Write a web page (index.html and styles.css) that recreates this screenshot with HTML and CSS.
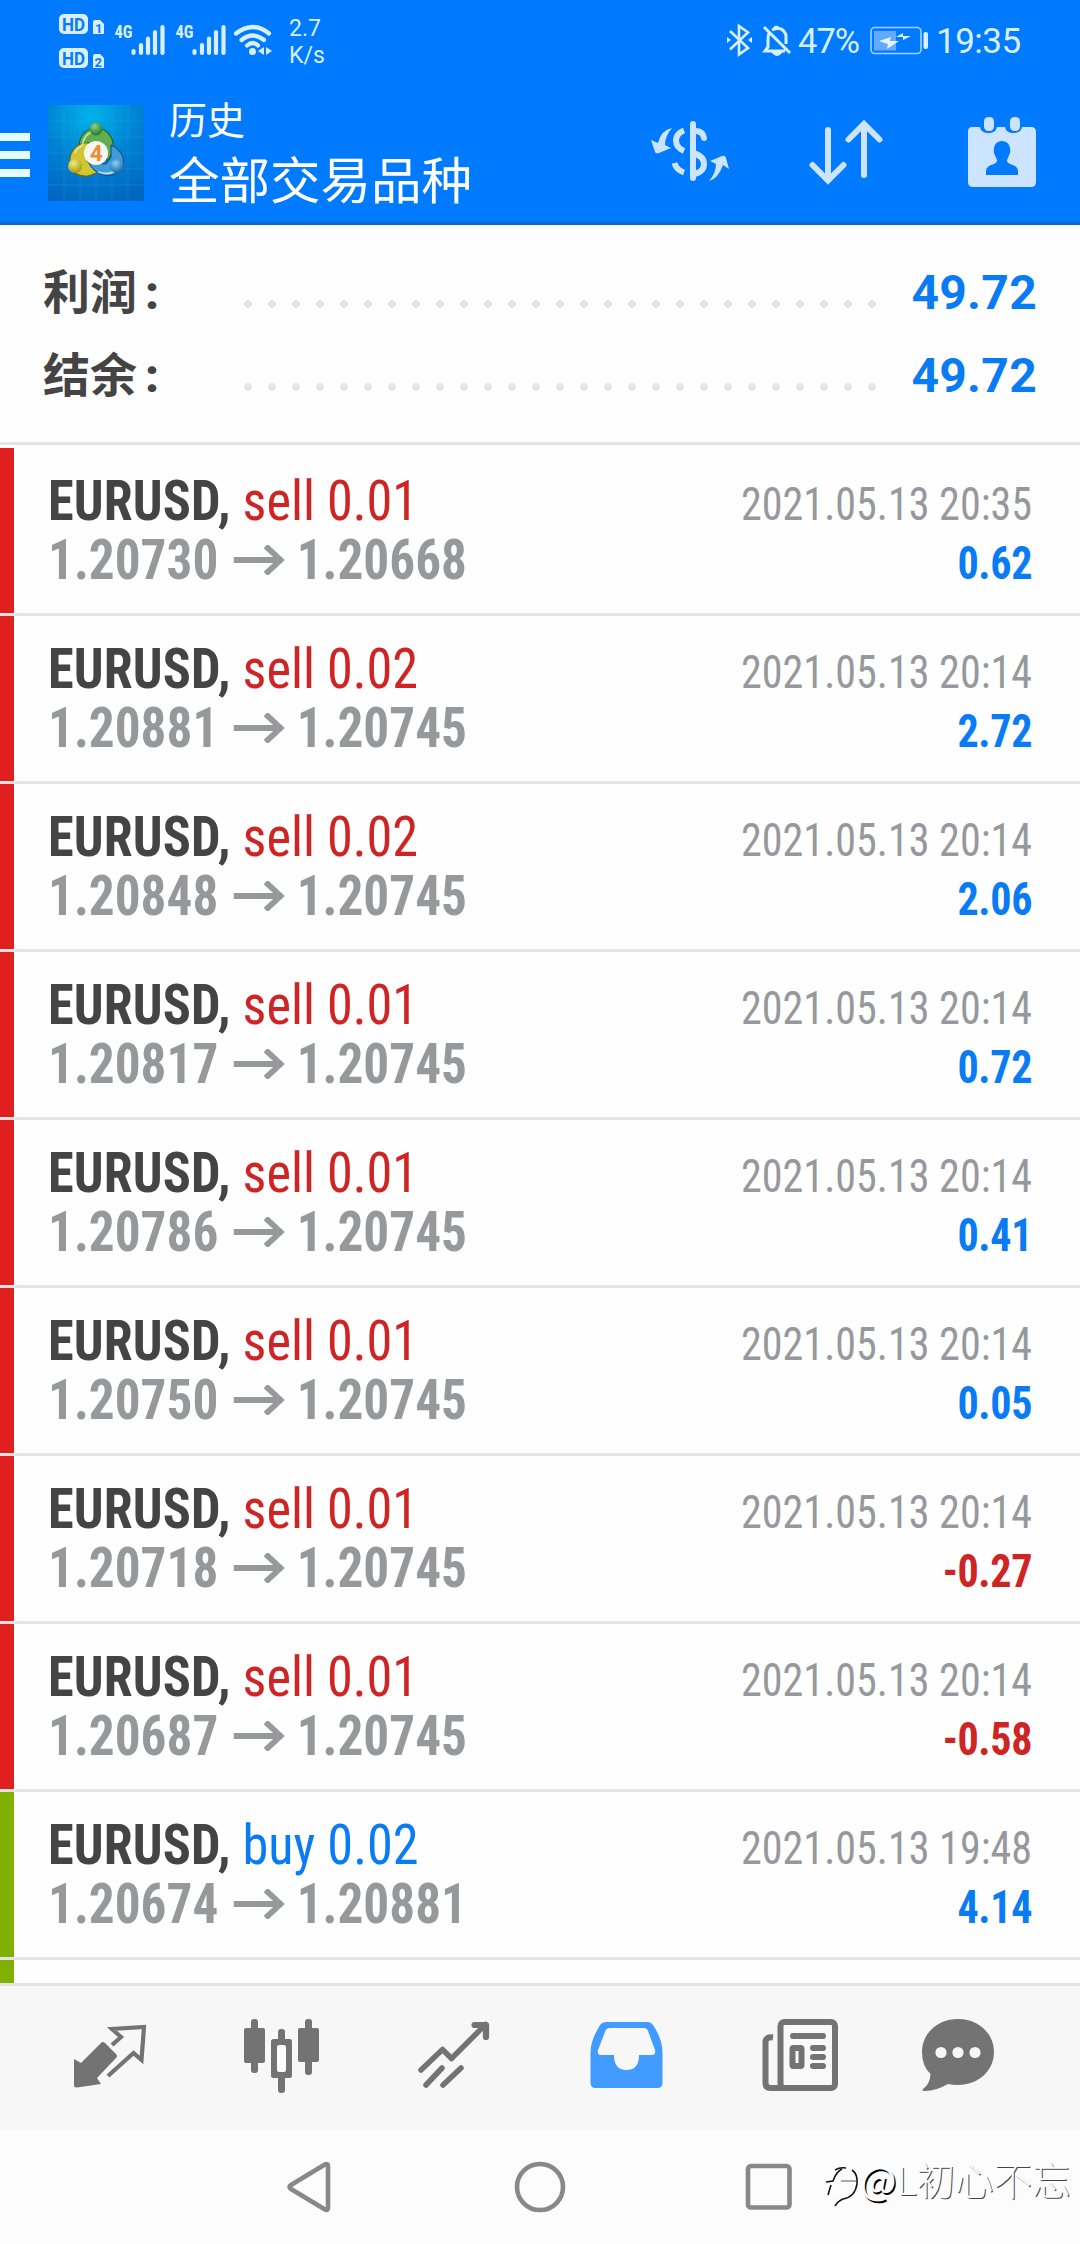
FILE: index.html
```html
<!DOCTYPE html>
<html lang="zh-CN">
<head>
<meta charset="utf-8">
<title>历史</title>
<link rel="stylesheet" href="styles.css">
</head>
<body>
<header class="header">
  <div class="status">
    <svg class="status-left" viewBox="0 0 280 75" width="280" height="75">
      <g fill="#d9efff">
        <rect x="59" y="14" width="29" height="20" rx="5"/>
        <rect x="59" y="48" width="29" height="20" rx="5"/>
        <path d="M93 22q0-2 2-2h5l4 4v10H93zM93 56q0-2 2-2h5l4 4v10H93z"/>
        <g class="hd-text" fill="#087bfa">
          <text x="62" y="30.500" textLength="23" lengthAdjust="spacingAndGlyphs">HD</text>
          <text x="62" y="64.500" textLength="23" lengthAdjust="spacingAndGlyphs">HD</text>
          <text x="95" y="32.500" class="sim">1</text>
          <text x="94.500" y="66.500" class="sim">2</text>
        </g>
        <g class="net-text">
          <text x="114.500" y="38" textLength="18" lengthAdjust="spacingAndGlyphs">4G</text>
          <text x="175.500" y="38" textLength="18" lengthAdjust="spacingAndGlyphs">4G</text>
        </g>
      </g>
      <g stroke="#d9efff" stroke-width="4.200" stroke-linecap="round" fill="none">
        <path d="M133.500 51v2M141 45v8M148 38.500v14.500M155 32v21M162.500 27v26"/>
        <path d="M194.500 51v2M202 45v8M209 38.500v14.500M216 32v21M223.500 27v26"/>
        <path d="M236 33.500q17-13 33 0M241.500 40q11.500-9 22.500 0M247 45.500q6-5 11 0"/>
      </g>
      <g fill="#d9efff"><circle cx="252.500" cy="51.500" r="3.500"/><path d="M264 47v8l-6-4zM266 47l6 4-6 4z"/></g>
    </svg>
    <div class="speed">2.7<br>K/s</div>
    <div class="status-right">
      <svg viewBox="725 20 70 40" width="70" height="40" fill="none" stroke="#d9efff" stroke-width="2.600">
        <path d="M730 31l18 17-9 6.500V26l9 6.500-18 17"/>
        <path d="M727 37l4 3-4 3zM752 37l-4 3 4 3z" fill="#d9efff" stroke="none"/>
        <path d="M764 27l26 26M769 33q-1 3-1 7v7l-3 4h20M772 30q10-5 14 5v9M774 29q2-4 5 0" stroke-width="3"/>
        <path d="M774 53q3 3 6 0z" fill="#d9efff"/>
      </svg>
      <span class="percent">47%</span>
      <svg viewBox="868 20 62 40" width="62" height="40">
        <rect x="871" y="27.500" width="50" height="26" rx="4" fill="none" stroke="#a5d2ff" stroke-width="1.600"/>
        <rect x="874" y="31" width="22" height="19.500" fill="#63a9ff"/>
        <path d="M879 41l12-4-1 4h9l-12 8 1-5zM896 37l7-4v3h8l-8 4v-3z" fill="#e5f5ff"/>
        <rect x="923.500" y="32" width="4.500" height="17" rx="2" fill="#d9efff"/>
      </svg>
      <span class="clock">19:35</span>
    </div>
  </div>
  <div class="toolbar">
    <div class="menu"><i></i><i></i><i></i></div>
    <svg class="logo" viewBox="0 0 96 96" width="96" height="96">
      <defs>
        <radialGradient id="bg" cx=".45" cy=".1" r=".95"><stop offset="0" stop-color="#00b2ea"/><stop offset=".5" stop-color="#0083d3"/><stop offset="1" stop-color="#0066c0"/></radialGradient>
        <radialGradient id="gr" cx=".4" cy=".3" r=".7"><stop offset="0" stop-color="#8fd07d"/><stop offset="1" stop-color="#1f7a2c"/></radialGradient>
        <radialGradient id="ye" cx=".4" cy=".3" r=".7"><stop offset="0" stop-color="#f4ec7c"/><stop offset="1" stop-color="#a59a14"/></radialGradient>
        <radialGradient id="bl" cx=".4" cy=".3" r=".7"><stop offset="0" stop-color="#8bd0f5"/><stop offset="1" stop-color="#1267ab"/></radialGradient>
      </defs>
      <rect width="96" height="96" fill="url(#bg)"/>
      <path d="M16 0v96M32 0v96M48 0v96M64 0v96M80 0v96M0 16h96M0 32h96M0 48h96M0 64h96M0 80h96" stroke="#45b4ef" stroke-width=".6" opacity=".35"/>
      <g stroke-width="1.200" stroke-linejoin="round">
        <path d="M31 42c0-11 7-19 17-19s19 9 17 22l-5 11-9-17-11-1z" fill="#62ad50" stroke="#1c6430"/>
        <path d="M36 38c-9 2-15 10-14 20s9 14 18 13l11-4-12-11 2-18z" fill="#d0c632" stroke="#6f6a16"/>
        <path d="M63 40c9 4 14 12 12 20s-11 12-20 10c-6-2-11-6-14-12l17 1 5-7z" fill="#3f9cdb" stroke="#13558f"/>
        <path d="M34 41c1-8 6-13 12-15M27 48c1-3 4-6 7-7M50 67c6 2 13 2 18-2" fill="none" stroke="#e4f3d8" stroke-opacity=".75" stroke-width="1.800"/>
      </g>
      <circle cx="48" cy="24" r="6.500" fill="url(#gr)"/>
      <circle cx="27" cy="61" r="7" fill="url(#ye)"/>
      <circle cx="69" cy="61" r="7" fill="url(#bl)"/>
      <circle cx="48" cy="48" r="12" fill="#f6f5f3"/>
      <text class="logo-num" x="42" y="55.500" fill="#f08a33">4</text>
    </svg>
    <div class="titles">
      <div class="title">历史</div>
      <div class="subtitle">全部交易品种</div>
    </div>
    <svg class="actions" viewBox="640 100 440 100" width="440" height="100">
      <g fill="#cce4ff">
        <path d="M672 128q-11 2-14 15l-7-3 4 12q1 2 4 1l12-5-6-3q0-9 7-17z"/>
        <path d="M709 181q9-2 14-16l6 4-3-11q-1-3-4-2l-12 5 6 3q0 9-7 17z"/>
      </g>
      <g fill="none" stroke="#cce4ff" stroke-width="6" stroke-linecap="round">
        <path d="M693 124v54"/>
        <path d="M693 131q10-1 11 7M693 153q11 3 11 11 0 8-11 10.500" />
        <path d="M684 130.500q-8 3-8 10 0 7 8 10.500M674.500 163q2 7 9.500 9.500" stroke-linecap="butt"/>
        <path d="M828 130v50M812.500 165l15.500 15.500L843.500 165M864 175v-50M848.500 139.500L864 124l15.500 15.500"/>
      </g>
      <g fill="#cce4ff">
        <path fill-rule="evenodd" d="M972 127h8q1 6 8.500 6t8.500-6h8q1 6 8.500 6t8.500-6h9q5 0 5 5v50q0 5-5 5h-58q-5 0-5-5v-50q0-5 4-5zM1002 141c-6 0-9 5-8 12l3 7q1 2-3 4-8 2-8 7v4h32v-4q0-5-8-7-4-2-3-4l3-7c1-7-2-12-8-12z"/>
        <rect x="984" y="117" width="10" height="14" rx="4.500"/>
        <rect x="1010" y="117" width="10" height="14" rx="4.500"/>
      </g>
    </svg>
  </div>
</header>

<section class="summary">
  <div class="sum-row"><span class="label">利润<b>:</b></span><span class="dots"></span><span class="amount">49.72</span></div>
  <div class="sum-row"><span class="label">结余<b>:</b></span><span class="dots"></span><span class="amount">49.72</span></div>
</section>

<main class="deals">
  <div class="deal sell"><div class="info"><div class="name"><b>EURUSD,</b> <span>sell 0.01</span></div><div class="price">1.20730<svg class="arrow" viewBox="0 0 51 28"><path d="M0 14h46M32 1l15 13-15 13"/></svg>1.20668</div></div><div class="side"><div class="date">2021.05.13 20:35</div><div class="profit">0.62</div></div></div>
  <div class="deal sell"><div class="info"><div class="name"><b>EURUSD,</b> <span>sell 0.02</span></div><div class="price">1.20881<svg class="arrow" viewBox="0 0 51 28"><path d="M0 14h46M32 1l15 13-15 13"/></svg>1.20745</div></div><div class="side"><div class="date">2021.05.13 20:14</div><div class="profit">2.72</div></div></div>
  <div class="deal sell"><div class="info"><div class="name"><b>EURUSD,</b> <span>sell 0.02</span></div><div class="price">1.20848<svg class="arrow" viewBox="0 0 51 28"><path d="M0 14h46M32 1l15 13-15 13"/></svg>1.20745</div></div><div class="side"><div class="date">2021.05.13 20:14</div><div class="profit">2.06</div></div></div>
  <div class="deal sell"><div class="info"><div class="name"><b>EURUSD,</b> <span>sell 0.01</span></div><div class="price">1.20817<svg class="arrow" viewBox="0 0 51 28"><path d="M0 14h46M32 1l15 13-15 13"/></svg>1.20745</div></div><div class="side"><div class="date">2021.05.13 20:14</div><div class="profit">0.72</div></div></div>
  <div class="deal sell"><div class="info"><div class="name"><b>EURUSD,</b> <span>sell 0.01</span></div><div class="price">1.20786<svg class="arrow" viewBox="0 0 51 28"><path d="M0 14h46M32 1l15 13-15 13"/></svg>1.20745</div></div><div class="side"><div class="date">2021.05.13 20:14</div><div class="profit">0.41</div></div></div>
  <div class="deal sell"><div class="info"><div class="name"><b>EURUSD,</b> <span>sell 0.01</span></div><div class="price">1.20750<svg class="arrow" viewBox="0 0 51 28"><path d="M0 14h46M32 1l15 13-15 13"/></svg>1.20745</div></div><div class="side"><div class="date">2021.05.13 20:14</div><div class="profit">0.05</div></div></div>
  <div class="deal sell"><div class="info"><div class="name"><b>EURUSD,</b> <span>sell 0.01</span></div><div class="price">1.20718<svg class="arrow" viewBox="0 0 51 28"><path d="M0 14h46M32 1l15 13-15 13"/></svg>1.20745</div></div><div class="side"><div class="date">2021.05.13 20:14</div><div class="profit loss">-0.27</div></div></div>
  <div class="deal sell"><div class="info"><div class="name"><b>EURUSD,</b> <span>sell 0.01</span></div><div class="price">1.20687<svg class="arrow" viewBox="0 0 51 28"><path d="M0 14h46M32 1l15 13-15 13"/></svg>1.20745</div></div><div class="side"><div class="date">2021.05.13 20:14</div><div class="profit loss">-0.58</div></div></div>
  <div class="deal buy"><div class="info"><div class="name"><b>EURUSD,</b> <span>buy 0.02</span></div><div class="price">1.20674<svg class="arrow" viewBox="0 0 51 28"><path d="M0 14h46M32 1l15 13-15 13"/></svg>1.20881</div></div><div class="side"><div class="date">2021.05.13 19:48</div><div class="profit">4.14</div></div></div>
  <div class="deal buy"></div>
</main>

<nav class="tabs">
  <svg viewBox="24 1986 172 144" fill="#737373">
    <path d="M74 2059l7 4 20-20q2-2 4 0l11 11q2 2 0 4l-19 20 4 6-24 3.500q-3 .500-3-2.500z"/>
    <path d="M112 2045l9-8-9-8 32-2-2.500 33-8-7-25.500 23" fill="none" stroke="#737373" stroke-width="4.200"/>
  </svg>
  <svg viewBox="196 1986 172 144" fill="#737373">
    <rect x="244" y="2028" width="21" height="35" rx="2"/><rect x="251" y="2019" width="7" height="54" rx="3"/>
    <rect x="298" y="2028" width="21" height="34" rx="2"/><rect x="305" y="2019" width="7" height="56" rx="3"/>
    <rect x="271" y="2039" width="21" height="39" rx="2.500"/><rect x="278" y="2029" width="7" height="64" rx="3"/>
    <rect x="277" y="2045" width="9" height="27" rx="2" fill="#fcfcfc"/>
  </svg>
  <svg viewBox="368 1986 172 144" fill="none" stroke="#737373" stroke-width="5.500" stroke-linecap="round" stroke-linejoin="round">
    <path d="M421 2070l21.500-20.500 9 9 34-34"/><path d="M474.500 2025h11.500v12" stroke-width="6.200"/>
    <path d="M426 2085l16-17M443 2085l18-17"/>
  </svg>
  <svg viewBox="540 1986 172 144">
    <path fill="#429bff" d="M607 2022h40q4 0 6 3c6 9 9.500 18 9.500 28v30q0 5-5 5h-62q-5 0-5-5v-30c0-10 4-19 9-27q2-4 7-4z"/>
    <path fill="#f7f7f8" d="M610 2028h34q3 0 4 3l7 19q1 5-3 5h-13q0 15-12.500 15T614 2055h-13q-4 0-3-5l7-18q1-4 5-4z"/>
  </svg>
  <svg viewBox="712 1986 172 144" fill="none" stroke="#737373" stroke-width="6">
    <rect x="780.500" y="2022" width="54.500" height="66" rx="4" fill="#f9f9fa"/>
    <path d="M773 2037.500q-7.500-1-7.500 5V2083q0 5 5 5H785"/>
    <path d="M793 2036h30M813 2048h10M813 2057h10M813 2066h10" stroke-linecap="round"/>
    <rect x="792.500" y="2048" width="9" height="18" rx="1"/>
  </svg>
  <svg viewBox="884 1986 172 144">
    <path fill="#737373" d="M958 2019c20 0 36 14 36 33s-16 33-36 33q-6 0-10-1-12 7-23 7-4 0-2-2 7-5 7.500-15-8.500-8-8.500-22c0-19 16-33 36-33z"/>
    <g fill="#f7f7f8"><circle cx="941" cy="2052.500" r="5.600"/><circle cx="958" cy="2052.500" r="5.600"/><circle cx="975" cy="2052.500" r="5.600"/></g>
  </svg>
</nav>

<footer class="sysnav">
  <svg viewBox="0 2130 820 114" width="820" height="114" fill="none" stroke="#888" stroke-width="4.600" stroke-linejoin="round">
    <path d="M326 2164q2 0 2 2v42q0 3-3 1.500l-34-20.500q-3-2 0-4l33-20q1-1 2-1z"/>
    <circle cx="540" cy="2187" r="23"/>
    <rect x="748" y="2166" width="41.500" height="41.500" rx="3"/>
  </svg>
  <div class="watermark">
    <svg viewBox="820 2160 42 50" width="42" height="50" fill="none" stroke="#111" stroke-width="1.600">
      <path d="M835 2170q5-3 11-2M852 2170q6 4 5 14-2 13-14 15-5 2-8 7"/>
      <path d="M826 2182l7-1q3-9 9-12M831 2185l-3 10"/>
      <path d="M841 2181h16" stroke-width=".7"/>
    </svg>
    <span><span class="at">@</span>L初心不忘</span>
  </div>
</footer>
</body>
</html>
```
FILE: styles.css
```css
* { box-sizing: border-box; }
body {
  margin: 0;
  width: 1080px;
  height: 2244px;
  overflow: hidden;
  display: flex;
  flex-direction: column;
  background: #fefefe;
  font-family: Roboto, "Noto Sans CJK SC", sans-serif;
}
svg { display: block; flex: none; }

.header { height: 225px; background: #007aff; border-bottom: 3px solid #0f69cc; color: #fff; flex: none; }
.status { height: 75px; display: flex; color: #d9efff; }
.hd-text { font: bold 18px "Roboto"; }
.hd-text .sim { font-size: 13px; }
.net-text { font: bold 18px "Roboto Condensed"; }
.speed { width: 60px; padding: 15px 0 0 9px; font-size: 23px; line-height: 27px; }
.status-right { display: flex; align-items: center; margin-left: 385px; height: 80px; }
.percent { width: 73px; padding: 2px 0 0 3px; font-size: 34.500px; letter-spacing: -1px; }
.clock { padding: 2px 0 0 6px; font-size: 35px; letter-spacing: -.5px; white-space: nowrap; }

.toolbar { display: flex; height: 147px; }
.menu { width: 30px; margin-right: 18px; padding-top: 58px; display: flex; flex-direction: column; gap: 10px; }
.menu i { height: 8px; background: #e6fbff; }
.logo { margin-top: 30px; }
.logo-num { font: bold 22px "Roboto"; }
.titles { width: 496px; padding: 18px 0 0 25px; white-space: nowrap; }
.title { font-size: 38px; line-height: 56px; }
.subtitle { font-size: 50.500px; line-height: 66px; }
.actions { margin-top: 25px; }

.summary { height: 220px; flex: none; padding: 26px 43px 0; border-bottom: 3px solid #e4e4e4; margin-bottom: 3px; }
.sum-row { height: 83px; display: flex; align-items: center; }
.label { width: 201px; font-size: 47px; line-height: 83px; font-weight: bold; color: #444; }
.label b { font-family: Roboto; margin-left: 8px; }
.dots { width: 632px; height: 8px; margin-top: 23px; background: radial-gradient(circle at 4px 4px, #e4e4e4 3.600px, transparent 4.200px) 0 0 / 24px 8px repeat-x; }
.amount { flex: 1; text-align: right; font-size: 48px; font-weight: bold; letter-spacing: .3px; color: #087bf5; }

.deals { height: 1535px; overflow: hidden; flex: none; }
.deal {
  height: 168px;
  display: flex;
  justify-content: space-between;
  padding: 24px 48px 0 48px;
  border-bottom: 3px solid #e4e4e4;
  background: linear-gradient(to right, var(--bar) 14px, transparent 14px);
  white-space: nowrap;
  font-family: "Roboto Condensed", Roboto, sans-serif;
}
.sell { --bar: #e11f1f; --side: #cf2424; }
.buy { --bar: #80b000; --side: #087bf5; }
.name, .price { font-size: 55px; line-height: 59px; transform-origin: left center; }
.name { color: var(--side); transform: scaleX(.95); }
.name b { color: #444; letter-spacing: .15px; }
.price { display: flex; align-items: center; color: #97989c; font-weight: bold; transform: scaleX(.932); }
.arrow { width: 55px; height: 30px; margin: -2px 13px 0 16px; fill: none; stroke: #97989c; stroke-width: 5.600; }
.side { padding-top: 3px; text-align: right; font-size: 46px; line-height: 59px; transform: scaleX(.915); transform-origin: right center; }
.date { color: #97989c; }
.profit { color: #087bf5; font-weight: bold; letter-spacing: -.4px; }
.profit.loss { color: #cf2424; }

.tabs { height: 147px; flex: none; display: flex; padding: 0 24px; background: #f7f7f8; border-top: 3px solid #e4e4e4; }
.tabs svg { width: 172px; height: 144px; }

.sysnav { height: 114px; flex: none; display: flex; background: #fcfcfc; }
.watermark { display: flex; align-items: flex-start; padding-top: 23px; white-space: nowrap; }
.watermark svg { margin-top: 7px; }
.watermark > span { margin-left: -2px; font: 300 38.500px/50px "Noto Sans CJK SC", sans-serif; color: #fff; text-shadow: 1px 1px 0 #444; }
.at { font-weight: 400; text-shadow: 1.500px 1.500px 0 #000; }
```
